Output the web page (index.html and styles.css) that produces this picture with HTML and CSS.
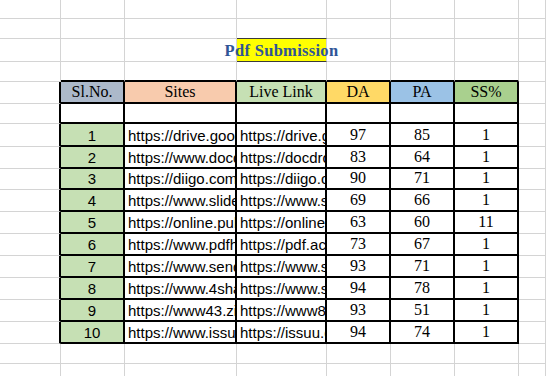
FILE: index.html
```html
<!DOCTYPE html>
<html>
<head>
<meta charset="utf-8">
<link rel="stylesheet" href="styles.css">
</head>
<body>
<div class="sheet">
<div class="c"></div><div class="c"></div><div class="c"></div><div class="c"></div><div class="c"></div><div class="c"></div><div class="c"></div><div class="c"></div>
<div class="c"></div><div class="c"></div><div class="c"></div><div class="c dk"></div><div class="c"></div><div class="c"></div><div class="c"></div><div class="c"></div>
<div class="c"></div><div class="c"></div><div class="c"></div><div class="c title dk"><span>Pdf Submission</span></div><div class="c"></div><div class="c"></div><div class="c"></div><div class="c"></div>
<div class="c"></div><div class="c bt"></div><div class="c bt"></div><div class="c bt"></div><div class="c bt"></div><div class="c bt"></div><div class="c bt"></div><div class="c"></div>
<div class="c bl"></div><div class="c t h h-sl">Sl.No.</div><div class="c t h h-site">Sites</div><div class="c t h h-live">Live Link</div><div class="c t h h-da">DA</div><div class="c t h h-pa">PA</div><div class="c t h h-ss">SS%</div><div class="c"></div>
<div class="c bl"></div><div class="c t"></div><div class="c t"></div><div class="c t"></div><div class="c t"></div><div class="c t"></div><div class="c t"></div><div class="c"></div>
<div class="c bl"></div><div class="c t sn">1</div><div class="c t u">https://drive.google.com/file/d/1</div><div class="c t u">https://drive.google.com/file/d/1</div><div class="c t n">97</div><div class="c t n">85</div><div class="c t n">1</div><div class="c"></div>
<div class="c bl"></div><div class="c t sn">2</div><div class="c t u">https://www.docdroid.net/</div><div class="c t u">https://docdroid.net/</div><div class="c t n">83</div><div class="c t n">64</div><div class="c t n">1</div><div class="c"></div>
<div class="c bl"></div><div class="c t sn">3</div><div class="c t u">https://diigo.com/</div><div class="c t u">https://diigo.com/</div><div class="c t n">90</div><div class="c t n">71</div><div class="c t n">1</div><div class="c"></div>
<div class="c bl"></div><div class="c t sn">4</div><div class="c t u">https://www.slideshare.net/</div><div class="c t u">https://www.slideshare.net/</div><div class="c t n">69</div><div class="c t n">66</div><div class="c t n">1</div><div class="c"></div>
<div class="c bl"></div><div class="c t sn">5</div><div class="c t u">https://online.pubhtml5.com/</div><div class="c t u">https://online.pubhtml5.com/</div><div class="c t n">63</div><div class="c t n">60</div><div class="c t n">11</div><div class="c"></div>
<div class="c bl"></div><div class="c t sn">6</div><div class="c t u">https://www.pdfhost.io/</div><div class="c t u">https://pdf.ac/</div><div class="c t n">73</div><div class="c t n">67</div><div class="c t n">1</div><div class="c"></div>
<div class="c bl"></div><div class="c t sn">7</div><div class="c t u">https://www.sendspace.com/</div><div class="c t u">https://www.sendspace.com/</div><div class="c t n">93</div><div class="c t n">71</div><div class="c t n">1</div><div class="c"></div>
<div class="c bl"></div><div class="c t sn">8</div><div class="c t u">https://www.4shared.com/</div><div class="c t u">https://www.scribd.com/</div><div class="c t n">94</div><div class="c t n">78</div><div class="c t n">1</div><div class="c"></div>
<div class="c bl"></div><div class="c t sn">9</div><div class="c t u">https://www43.zippyshare.com/</div><div class="c t u">https://www8.zippyshare.com/</div><div class="c t n">93</div><div class="c t n">51</div><div class="c t n">1</div><div class="c"></div>
<div class="c bl"></div><div class="c t sn">10</div><div class="c t u">https://www.issuu.com/</div><div class="c t u">https://issuu.com/</div><div class="c t n">94</div><div class="c t n">74</div><div class="c t n">1</div><div class="c"></div>
<div class="c"></div><div class="c"></div><div class="c"></div><div class="c"></div><div class="c"></div><div class="c"></div><div class="c"></div><div class="c"></div>
<div class="c"></div><div class="c"></div><div class="c"></div><div class="c"></div><div class="c"></div><div class="c"></div><div class="c"></div><div class="c"></div>
</div>
</body>
</html>
```

FILE: styles.css
```css
html, body {
  margin: 0;
  padding: 0;
  background: #fff;
  overflow: hidden;
}
.sheet {
  width: 546px;
  height: 376px;
  overflow: hidden;
  display: grid;
  grid-template-columns: 61px 64px 112px 90px 64px 64px 64px 27px;
  grid-template-rows: 19px 20px 23px 20px 22px 20px 23px 22px 21px 22px 22px 22px 22px 22px 22px 22px 20px 20px;
}
.c {
  box-sizing: border-box;
  border-right: 1px solid #d4d4d4;
  border-bottom: 1px solid #d4d4d4;
  white-space: nowrap;
  overflow: hidden;
  display: flex;
  align-items: flex-end;
  color: #000;
}
.dk {
  border-bottom-color: #3a3a3a;
}
.bl {
  border-right: 2px solid #000;
}
.bt {
  border-bottom: 2px solid #000;
}
.t {
  border-right: 2px solid #000;
  border-bottom: 2px solid #000;
}
.title {
  background: #ffff00;
  overflow: visible;
  justify-content: center;
  align-items: center;
  font-family: "Liberation Serif", serif;
  font-weight: bold;
  font-size: 16.5px;
  color: #2f5597;
}
.title span {
  letter-spacing: 0.3px;
  padding-top: 1px;
}
.h {
  justify-content: center;
  font-family: "Liberation Serif", serif;
  font-size: 16px;
  padding-bottom: 1px;
}
.h-sl { background: #acb9ca; }
.h-site { background: #f8cbad; }
.h-live { background: #c6e0b4; }
.h-da { background: #ffd966; }
.h-pa { background: #9bc2e6; }
.h-ss { background: #a9d08e; }
.n {
  justify-content: center;
  font-family: "Liberation Serif", serif;
  font-size: 16px;
  padding-bottom: 1px;
}
.sn {
  justify-content: center;
  background: #c6e0b4;
  font-family: "Liberation Sans", sans-serif;
  font-size: 15px;
  padding-bottom: 1px;
}
.u {
  justify-content: flex-start;
  font-family: "Liberation Sans", sans-serif;
  font-size: 15px;
  padding-left: 3px;
  padding-bottom: 1px;
}
```
